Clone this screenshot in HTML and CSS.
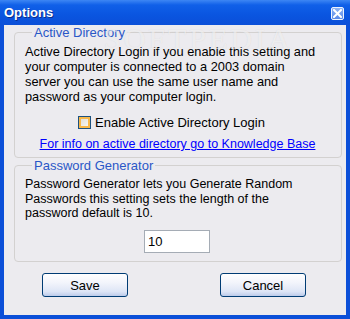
FILE: index.html
```html
<!DOCTYPE html>
<html>
<head>
<meta charset="utf-8">
<link rel="stylesheet" href="styles.css">
</head>
<body>
<div class="window">
  <div class="titlebar">
    <span class="title">Options</span>
    <span class="close"><svg width="9" height="9" viewBox="0 0 9 9"><path d="M1 1L8 8M8 1L1 8" stroke="#fff" stroke-width="2" stroke-linecap="square"/></svg></span>
  </div>
  <div class="client">
    <fieldset class="group g1">
      <legend>Active Directory</legend>
      <p class="desc">Active Directory Login if you enable this setting and<br>your computer is connected to a 2003 domain<br>server you can use the same user name and<br>password as your computer login.</p>
      <label class="check"><span class="box"></span>Enable Active Directory Login</label>
      <a class="link" href="#">For info on active directory go to Knowledge Base</a>
    </fieldset>
    <fieldset class="group g2">
      <legend>Password Generator</legend>
      <p class="desc">Password Generator lets you Generate Random<br>Passwords this setting sets the length of the<br>password default is 10.</p>
      <div class="inputrow"><span class="input">10</span></div>
    </fieldset>
    <div class="buttons">
      <button class="btn">Save</button>
      <button class="btn">Cancel</button>
    </div>
  </div>
  <div class="watermark">SOFTPEDIA</div>
</div>
</body>
</html>
```
FILE: styles.css
```css
html, body {
  margin: 0;
  padding: 0;
}
body {
  width: 350px;
  height: 319px;
  overflow: hidden;
  font-family: "Liberation Sans", Arial, sans-serif;
  font-size: 12.5px;
  color: #000;
}
.window {
  position: relative;
  width: 350px;
  height: 319px;
  box-sizing: border-box;
  background: #0b4fd8;
  display: flex;
  flex-direction: column;
}
.titlebar {
  height: 25px;
  flex: none;
  display: flex;
  align-items: center;
  justify-content: space-between;
  padding: 0 6px 0 4px;
  background: linear-gradient(to bottom, #3d86f4 0%, #1060e8 20%, #0a55e0 60%, #0b4fd8 100%);
}
.title {
  color: #fff;
  font-weight: bold;
  font-size: 13px;
  text-shadow: 1px 1px 0 #0a2e8c;
}
.close {
  width: 13px;
  height: 13px;
  box-sizing: border-box;
  border: 1px solid #eef3fd;
  border-radius: 2px;
  background: linear-gradient(to bottom, #8fb4f5, #5a8ae8);
  display: flex;
  align-items: center;
  justify-content: center;
  margin-top: 2px;
}
.close svg { display: block; }
.client {
  flex: 1;
  margin: 0 4px 4px 4px;
  background: #ecebef;
  padding: 0 4px 0 10px;
  display: flex;
  flex-direction: column;
}
.group {
  margin: 0;
  border: 1px solid #d3d1d0;
  border-radius: 4px;
  padding: 0 23px 0 10px;
  min-width: 0;
}
.group legend {
  color: #2a57c7;
  padding: 0 2px;
  margin-left: 7px;
  line-height: 15px;
  font-size: 13px;
}
.desc {
  margin: 4px 0 0 0;
  line-height: 15px;
  white-space: nowrap;
}
.g1 .desc {
  font-size: 12.8px;
}
.check {
  display: flex;
  align-items: center;
  justify-content: center;
  gap: 4px;
  margin-top: 10px;
  height: 16px;
  font-size: 13px;
}
.box {
  width: 13px;
  height: 13px;
  box-sizing: border-box;
  border: 1px solid #1c5180;
  background: linear-gradient(135deg, #dcdad2, #fbfbf8);
  box-shadow: inset 0 0 0 2px #f8b84a;
}
.link {
  display: block;
  text-align: center;
  color: #0000ff;
  text-decoration: underline;
  margin-top: 7px;
  padding-left: 12px;
  line-height: 15px;
  height: 20px;
}
.g2 {
  margin-top: 0;
  height: 104px;
  box-sizing: border-box;
}
.g2 .desc {
  margin-top: 4px;
  line-height: 14.5px;
}
.inputrow {
  display: flex;
  justify-content: center;
  margin-top: 9px;
  padding-left: 11px;
}
.input {
  width: 66px;
  height: 23px;
  box-sizing: border-box;
  border: 1px solid #a5acb5;
  background: #fff;
  padding-left: 3px;
  line-height: 21px;
  font-size: 13px;
}
.buttons {
  display: flex;
  justify-content: space-between;
  padding: 0 36px 0 28px;
  margin-top: 11px;
}
.btn {
  width: 86px;
  height: 24px;
  border: 1px solid #003c74;
  border-radius: 3px;
  background: linear-gradient(to bottom, #ffffff 0%, #f2f4fb 40%, #dde5f6 80%, #bccbea 100%);
  font-family: "Liberation Sans", Arial, sans-serif;
  font-size: 13px;
  color: #000;
  padding: 0;
}
.watermark {
  position: absolute;
  left: 104px;
  top: 22px;
  font-family: "Liberation Serif", serif;
  font-size: 30px;
  letter-spacing: 3px;
  color: rgba(255, 255, 255, 0.55);
  text-shadow: 0 0 1px rgba(150, 150, 150, 0.25);
  pointer-events: none;
}
```
